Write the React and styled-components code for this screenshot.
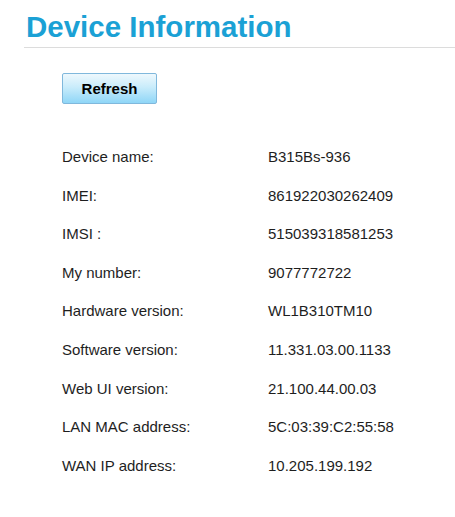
import React from 'react';
import styled, { createGlobalStyle } from 'styled-components';

const GlobalStyle = createGlobalStyle`
  body {
    margin: 0;
    background: #ffffff;
    font-family: "Liberation Sans", Arial, sans-serif;
  }
`;

const info = [
  ['Device name:', 'B315Bs-936'],
  ['IMEI:', '861922030262409'],
  ['IMSI :', '515039318581253'],
  ['My number:', '9077772722'],
  ['Hardware version:', 'WL1B310TM10'],
  ['Software version:', '11.331.03.00.1133'],
  ['Web UI version:', '21.100.44.00.03'],
  ['LAN MAC address:', '5C:03:39:C2:55:58'],
  ['WAN IP address:', '10.205.199.192'],
];

const App = () => {
  return (
    <Page>
      <GlobalStyle />
      <Title>Device Information</Title>
      <Content>
        <RefreshButton type="button">Refresh</RefreshButton>
        <InfoTable>
          {info.map(([label, value]) => (
            <Row key={label}>
              <Label>{label}</Label>
              <Value>{value}</Value>
            </Row>
          ))}
        </InfoTable>
      </Content>
    </Page>
  );
};

const Page = styled.div`
  padding: 8px 0 0 24px;
  width: 431px;
`;

const Title = styled.h1`
  margin: 0;
  padding: 3px 0 4px 2px;
  font-size: 29.5px;
  font-weight: bold;
  line-height: 32px;
  color: #1ba1d5;
  border-bottom: 1px solid #dcdcdc;
`;

const Content = styled.div`
  padding: 25px 0 0 38px;
`;

const RefreshButton = styled.button`
  display: block;
  width: 95px;
  height: 31px;
  margin: 0;
  padding: 0;
  border: 1px solid #80b8dc;
  border-radius: 2px;
  background: linear-gradient(to bottom, #eef8fd 0%, #c9ecfb 45%, #8fd6f7 100%);
  font-family: "Liberation Sans", Arial, sans-serif;
  font-size: 15px;
  font-weight: bold;
  color: #000;
`;

const InfoTable = styled.div`
  padding-top: 44px;
  display: flex;
  flex-direction: column;
`;

const Row = styled.div`
  display: grid;
  grid-template-columns: 206px 1fr;
  height: 38.6px;
  align-items: start;
  font-size: 15px;
  line-height: 18px;
  color: #1e1e1e;
`;

const Label = styled.span``;

const Value = styled.span``;

export default App;
